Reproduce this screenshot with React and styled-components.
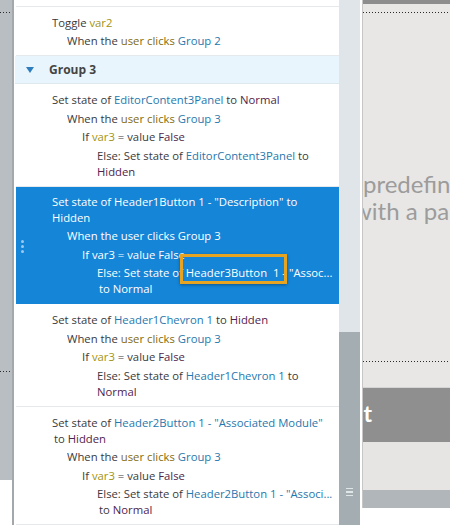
import React from 'react';
import styled, { createGlobalStyle } from 'styled-components';

const GlobalStyle = createGlobalStyle`
  html, body {
    margin: 0;
    padding: 0;
    background: #fff;
    overflow: hidden;
  }
`;

const Screen = styled.div`
  display: flex;
  width: 450px;
  height: 525px;
  overflow: hidden;
  font-family: "Open Sans", "Noto Sans", sans-serif;
`;

const Dotted = styled.div`
  height: 1px;
  margin-top: ${p => p.$top}px;
  background: repeating-linear-gradient(90deg, #2a2a2a 0 1px, transparent 1px 3px);
`;

// left side of the canvas, mostly hidden under the panel
const LeftCanvas = styled.div`
  width: 12px;
  display: flex;
  flex-direction: column;
`;

const LeftGray = styled.div`
  height: 480px;
  background: #b9bec2;
  display: flex;
  flex-direction: column;
`;

const PanelEdge = styled.div`
  width: 2px;
  background: #a2a8ac;
`;

const Panel = styled.div`
  width: 325px;
  background: #fff;
  display: flex;
  flex-direction: column;
  overflow: hidden;
  font-size: 11.3px;
  color: #3a3a3a;
`;

const Row = styled.div`
  margin-left: 2px;
  padding: ${p => (p.$selected ? '7px 5px 6px 0' : '8px 5px 6px 0')};
  background: ${p => (p.$selected ? '#1585d8' : '#fff')};
  color: ${p => (p.$selected ? '#fff' : 'inherit')};
  border-bottom: 1px solid ${p => (p.$selected ? '#1585d8' : '#e6e9eb')};
  position: relative;
  display: flex;
  flex-direction: column;
  gap: 2.5px;
`;

const TopStub = styled.div`
  height: 6px;
  margin-left: 2px;
  border-bottom: 1px solid #e6e9eb;
`;

const GroupHeader = styled.div`
  margin-left: 1px;
  height: 27px;
  background: #e9f5fc;
  border-bottom: 1px solid #dde8ef;
  display: flex;
  align-items: center;
  font-weight: 700;
  font-size: 12px;
  color: #444;
`;

const Caret = styled.span`
  width: 0;
  height: 0;
  margin: 0 15px 0 11px;
  border-left: 4.5px solid transparent;
  border-right: 4.5px solid transparent;
  border-top: 6px solid #2e7ebf;
`;

const Item = styled.div`
  padding-left: ${p => 36 + p.$level * 15}px;
`;

const Line = styled.div`
  line-height: 16px;
  white-space: nowrap;
  overflow: ${p => (p.$open ? 'visible' : 'hidden')};
  text-overflow: ellipsis;
  padding-left: ${p => (p.$shift ? 2 : 0)}px;
`;

const Obj = styled.span`
  color: ${p => (p.$on ? '#fff' : '#2777ad')};
`;

const Evt = styled.span`
  color: ${p => (p.$on ? '#fff' : '#7f6c0c')};
`;

const Var = styled.span`
  color: ${p => (p.$on ? '#fff' : '#a29313')};
`;

const Val = styled.span`
  color: ${p => (p.$on ? '#fff' : '#50234c')};
`;

const Handle = styled.div`
  position: absolute;
  left: 5px;
  top: 53px;
  display: flex;
  flex-direction: column;
  gap: 2px;

  span {
    width: 3px;
    height: 3px;
    border-radius: 50%;
    background: #9dcaf0;
  }
`;

const Highlight = styled.span`
  position: relative;

  &::after {
    content: '';
    position: absolute;
    left: -6px;
    right: -1px;
    top: -11px;
    bottom: -4px;
    border: 3px solid #e7a422;
    box-shadow: 0 1px 3px rgba(0, 0, 0, 0.35);
  }
`;

const Scrollbar = styled.div`
  width: 21px;
  display: flex;
  flex-direction: column;
`;

const Track = styled.div`
  height: 332px;
  background: #dfe5e9;
`;

const Thumb = styled.div`
  flex: 1;
  background: #a3adb2;
  display: flex;
  flex-direction: column;
  align-items: center;
  justify-content: flex-end;
  gap: 2px;
  padding-bottom: 29px;

  span {
    width: 7px;
    height: 1.5px;
    background: #e0e5e8;
  }
`;

const Gutter = styled.div`
  width: 2px;
  background: #fff;
`;

const CanvasEdge = styled.div`
  width: 1px;
  height: 508px;
  background: #c6c6c6;
`;

const Canvas = styled.div`
  flex: 1;
  display: flex;
  flex-direction: column;
  overflow: hidden;
`;

const CanvasTop = styled.div`
  height: 4px;
  background: #8d8d8d;
`;

const CanvasBody = styled.div`
  height: 383px;
  background: #e8e7e5;
  display: flex;
  flex-direction: column;
`;

const BigText = styled.div`
  margin: 157px 0 0 -10px;
  font-family: Lato, sans-serif;
  font-size: 24px;
  line-height: 27px;
  color: #9c9c9c;
  white-space: nowrap;
`;

const TextLine = styled.div`
  padding-left: ${p => p.$indent || 0}px;
`;

const ButtonBlock = styled.div`
  height: 55px;
  background: #8f8f8f;
  border-top: 1px solid #d4d4d4;
  box-sizing: border-box;
  font-family: Lato, sans-serif;
  font-weight: 700;
  font-size: 23px;
  color: #fff;
  white-space: nowrap;
  padding-top: 11px;
  margin-left: -33px;
`;

const CanvasLight = styled.div`
  height: 48px;
  background: #e6e5e3;
`;

const CanvasBand = styled.div`
  height: 18px;
  background: #b1b6ba;
`;

function App() {
  return (
    <>
      <GlobalStyle />
      <Screen>
        <LeftCanvas>
          <LeftGray>
            <Dotted $top={12} />
            <Dotted $top={358} />
          </LeftGray>
        </LeftCanvas>
        <PanelEdge />
        <Panel>
          <TopStub />
          <Row>
            <Item $level={0}>
              <Line>Toggle <Var>var2</Var></Line>
            </Item>
            <Item $level={1}>
              <Line>When the <Evt>user clicks</Evt> <Obj>Group 2</Obj></Line>
            </Item>
          </Row>
          <GroupHeader>
            <Caret />
            Group 3
          </GroupHeader>
          <Row>
            <Item $level={0}>
              <Line>Set state of <Obj>EditorContent3Panel</Obj> to <Val>Normal</Val></Line>
            </Item>
            <Item $level={1}>
              <Line>When the <Evt>user clicks</Evt> <Obj>Group 3</Obj></Line>
            </Item>
            <Item $level={2}>
              <Line>If <Var>var3</Var> = value <Val>False</Val></Line>
            </Item>
            <Item $level={3}>
              <Line>Else: Set state of <Obj>EditorContent3Panel</Obj> to</Line>
              <Line><Val>Hidden</Val></Line>
            </Item>
          </Row>
          <Row $selected>
            <Handle><span /><span /><span /></Handle>
            <Item $level={0}>
              <Line>Set state of <Obj $on>Header1Button 1 - "Description"</Obj> to</Line>
              <Line><Val $on>Hidden</Val></Line>
            </Item>
            <Item $level={1}>
              <Line>When the <Evt $on>user clicks</Evt> <Obj $on>Group 3</Obj></Line>
            </Item>
            <Item $level={2}>
              <Line>If <Var $on>var3</Var> = value <Val $on>False</Val></Line>
            </Item>
            <Item $level={3}>
              <Line $open>
                Else: Set state of <Highlight><Obj $on>Header3Button&nbsp; 1 -</Obj></Highlight> <Obj $on>"Assoc...</Obj>
              </Line>
              <Line $shift>to <Val $on>Normal</Val></Line>
            </Item>
          </Row>
          <Row>
            <Item $level={0}>
              <Line>Set state of <Obj>Header1Chevron 1</Obj> to <Val>Hidden</Val></Line>
            </Item>
            <Item $level={1}>
              <Line>When the <Evt>user clicks</Evt> <Obj>Group 3</Obj></Line>
            </Item>
            <Item $level={2}>
              <Line>If <Var>var3</Var> = value <Val>False</Val></Line>
            </Item>
            <Item $level={3}>
              <Line>Else: Set state of <Obj>Header1Chevron 1</Obj> to</Line>
              <Line><Val>Normal</Val></Line>
            </Item>
          </Row>
          <Row>
            <Item $level={0}>
              <Line>Set state of <Obj>Header2Button 1 - "Associated Module"</Obj></Line>
              <Line $shift>to <Val>Hidden</Val></Line>
            </Item>
            <Item $level={1}>
              <Line>When the <Evt>user clicks</Evt> <Obj>Group 3</Obj></Line>
            </Item>
            <Item $level={2}>
              <Line>If <Var>var3</Var> = value <Val>False</Val></Line>
            </Item>
            <Item $level={3}>
              <Line $open>Else: Set state of <Obj>Header2Button 1 - "Associ...</Obj></Line>
              <Line $shift>to <Val>Normal</Val></Line>
            </Item>
          </Row>
        </Panel>
        <Scrollbar>
          <Track />
          <Thumb><span /><span /><span /></Thumb>
        </Scrollbar>
        <Gutter />
        <CanvasEdge />
        <Canvas>
          <CanvasTop />
          <CanvasBody>
            <Dotted $top={8} />
            <BigText>
              <TextLine $indent={10}>predefined</TextLine>
              <TextLine>with a particular</TextLine>
            </BigText>
            <Dotted $top={137} />
          </CanvasBody>
          <ButtonBlock>Test</ButtonBlock>
          <CanvasLight />
          <CanvasBand />
        </Canvas>
      </Screen>
    </>
  );
}

export default App;
